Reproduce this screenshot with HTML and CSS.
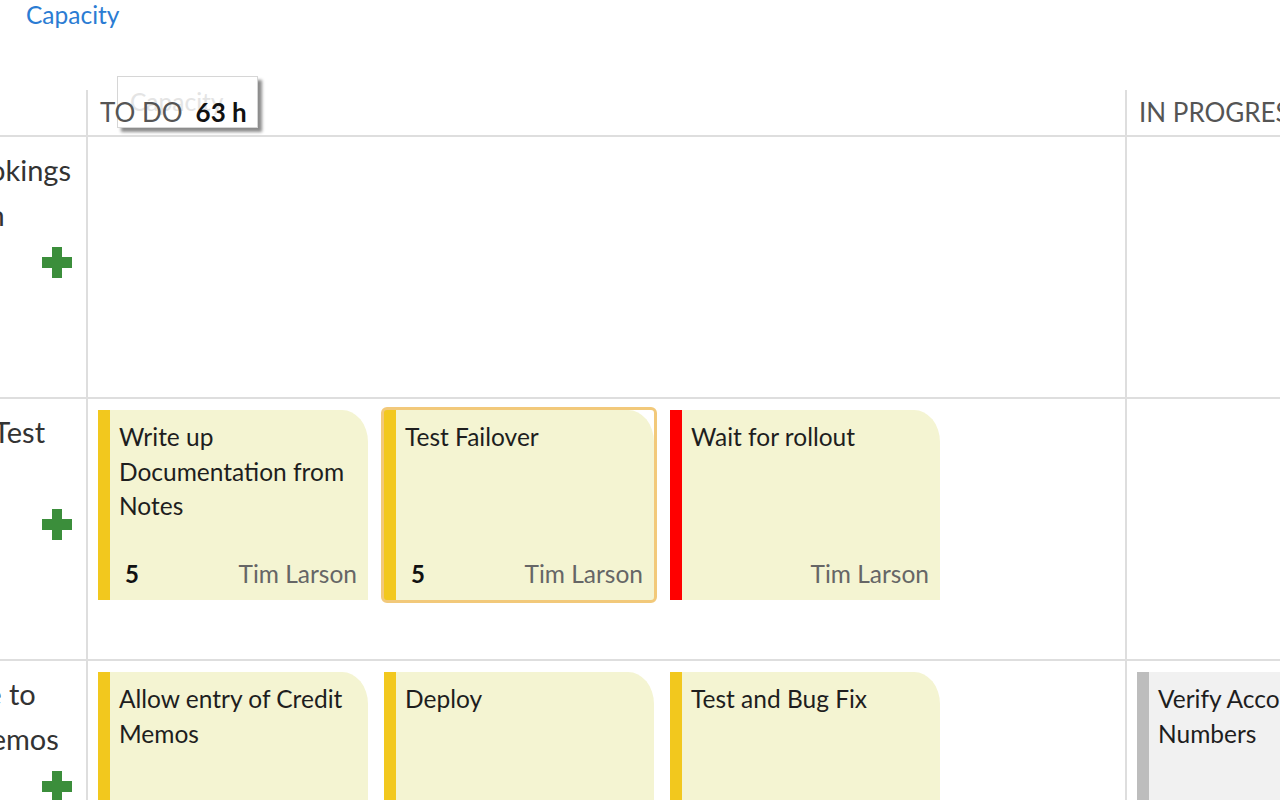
FILE: index.html
```html
<!DOCTYPE html>
<html lang="en">
<head>
<meta charset="utf-8">
<title>Task board</title>
<link rel="stylesheet" href="styles.css">
</head>
<body>
<div class="topbar">
  <a class="cap-link" href="#">Capacity</a>
</div>
<div class="board">
  <div class="cell head-left"></div>
  <div class="cell head-col">
    <div class="tooltip">Capacity</div>
    <span class="col-name">TO DO</span><span class="col-hours">63 h</span>
  </div>
  <div class="cell head-col head-last">
    <span class="col-name">IN PROGRESS</span>
  </div>

  <div class="cell row-title">
    <div class="title-text">Track Room Bookings<br>in each Location</div>
    <svg class="plus" width="30" height="31" viewBox="0 0 30 31"><rect x="10" y="0" width="10" height="31" fill="#3b8e3b"/><rect x="0" y="10" width="30" height="11" fill="#3b8e3b"/></svg>
  </div>
  <div class="cell lane"></div>
  <div class="cell lane lane-last"></div>

  <div class="cell row-title">
    <div class="title-text">A Performance Test</div>
    <svg class="plus" width="30" height="31" viewBox="0 0 30 31"><rect x="10" y="0" width="10" height="31" fill="#3b8e3b"/><rect x="0" y="10" width="30" height="11" fill="#3b8e3b"/></svg>
  </div>
  <div class="cell lane">
    <div class="card">
      <div class="card-title">Write up Documentation from Notes</div>
      <div class="card-foot"><span class="hours">5</span><span class="owner">Tim Larson</span></div>
    </div>
    <div class="card selected">
      <div class="card-title">Test Failover</div>
      <div class="card-foot"><span class="hours">5</span><span class="owner">Tim Larson</span></div>
    </div>
    <div class="card blocked">
      <div class="card-title">Wait for rollout</div>
      <div class="card-foot"><span class="owner">Tim Larson</span></div>
    </div>
  </div>
  <div class="cell lane lane-last"></div>

  <div class="cell row-title">
    <div class="title-text">Require Finance to<br>Apply Credit Memos</div>
    <svg class="plus" width="30" height="31" viewBox="0 0 30 31"><rect x="10" y="0" width="10" height="31" fill="#3b8e3b"/><rect x="0" y="10" width="30" height="11" fill="#3b8e3b"/></svg>
  </div>
  <div class="cell lane">
    <div class="card">
      <div class="card-title">Allow entry of Credit Memos</div>
      <div class="card-foot"><span class="hours">8</span><span class="owner">Tim Larson</span></div>
    </div>
    <div class="card">
      <div class="card-title">Deploy</div>
      <div class="card-foot"><span class="hours">2</span><span class="owner">Tim Larson</span></div>
    </div>
    <div class="card">
      <div class="card-title">Test and Bug Fix</div>
      <div class="card-foot"><span class="hours">4</span><span class="owner">Tim Larson</span></div>
    </div>
  </div>
  <div class="cell lane lane-last">
    <div class="card done-ish">
      <div class="card-title">Verify Account Numbers</div>
      <div class="card-foot"><span class="hours">3</span><span class="owner">Tim Larson</span></div>
    </div>
  </div>
</div>
</body>
</html>
```

FILE: styles.css
```css
* { box-sizing: border-box; }

html, body {
  margin: 0;
  padding: 0;
  background: #ffffff;
  overflow: hidden;
  width: 1280px;
  height: 800px;
}

body {
  font-family: Lato, "Open Sans", sans-serif;
  color: #222;
}

.topbar {
  height: 90px;
  padding-left: 26px;
}

.cap-link {
  font-size: 24.5px;
  line-height: 30px;
  color: #2b7cd3;
  text-decoration: none;
}

.board {
  display: grid;
  grid-template-columns: 300px 1039px 1000px;
  grid-template-rows: 47px 262px 262px 262px;
  margin-left: -212px;
  width: 2339px;
}

.cell {
  border-bottom: 2px solid #dedede;
  border-right: 2px solid #dedede;
}

.head-last, .lane-last {
  border-right: none;
}

.head-col {
  position: relative;
  padding-left: 12px;
  font-size: 26px;
  line-height: 45px;
  white-space: nowrap;
}

.col-name {
  position: relative;
  z-index: 2;
  color: #555;
}

.col-hours {
  position: relative;
  z-index: 2;
  margin-left: 13px;
  font-weight: 700;
  color: #111;
}

.tooltip {
  position: absolute;
  z-index: 1;
  left: 29px;
  top: -14px;
  width: 141px;
  height: 52px;
  padding: 8px 0 0 12px;
  background: #fff;
  border: 1px solid #d6d6d6;
  box-shadow: 4px 4px 3px rgba(0, 0, 0, 0.45);
  color: #e4e4e4;
  font-size: 24.5px;
  line-height: 34px;
}

.row-title {
  display: flex;
  flex-direction: column;
  padding: 10px 14px 0 10px;
}

.title-text {
  height: 100px;
  font-size: 29px;
  line-height: 45px;
  white-space: nowrap;
  color: #333;
}

.plus {
  align-self: flex-end;
  display: block;
}

.lane {
  display: flex;
  align-items: flex-start;
  gap: 16px;
  padding: 11px 10px 0 10px;
  overflow: hidden;
}

.card {
  position: relative;
  flex: 0 0 270px;
  width: 270px;
  height: 190px;
  display: flex;
  flex-direction: column;
  background: #f4f4d2;
  border-left: 12px solid #f2c81e;
  border-top-right-radius: 26px 32px;
  font-size: 24.5px;
  line-height: 34.5px;
}

.card.blocked {
  border-left-color: #ff0000;
}

.card.done-ish {
  background: #f1f1f1;
  border-left-color: #bdbdbd;
}

.card.selected::after {
  content: "";
  position: absolute;
  left: -15px;
  top: -3px;
  right: -3px;
  bottom: -3px;
  border: 3px solid #f2c97a;
  border-radius: 6px;
}

.card-title {
  flex: 1;
  padding: 10px 10px 0 9px;
  color: #1e1e1e;
}

.card-foot {
  display: flex;
  justify-content: space-between;
  padding: 0 11px 9px 15px;
}

.hours {
  font-weight: 700;
  font-size: 24px;
  color: #111;
}

.owner {
  margin-left: auto;
  color: #666;
}
```
